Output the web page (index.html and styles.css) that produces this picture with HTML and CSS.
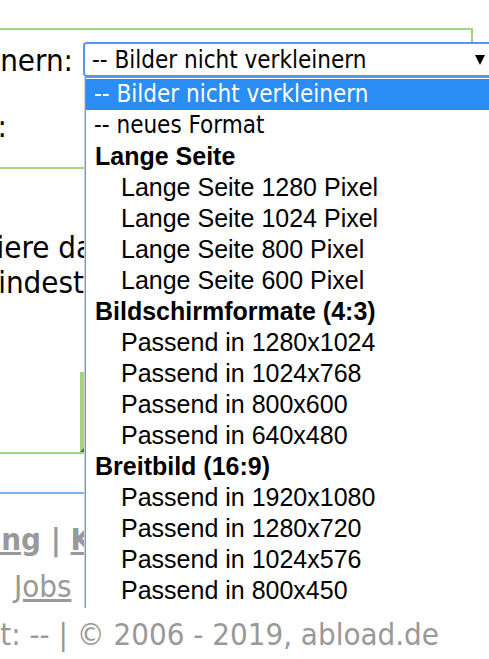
FILE: index.html
```html
<!DOCTYPE html>
<html lang="de">
<head>
    <meta charset="utf-8">
    <title>abload.de - Bilder hochladen</title>
    <link rel="stylesheet" href="styles.css">
</head>
<body>
    <div class="upload-box">
        <div class="form-row">
            <div class="form-label"><span>Bilder verkleinern:</span></div>
            <div class="select-box">
                <span class="select-value">-- Bilder nicht verkleinern</span>
                <svg class="select-arrow" width="10" height="10" viewBox="0 0 10 10"><polygon points="0,0 10,0 5,10"/></svg>
            </div>
        </div>
        <div class="form-row">
            <div class="form-label form-label-short"><span>Galerie:</span></div>
        </div>
    </div>

    <p class="intro">
        <span class="intro-line intro-first">Kopiere das Bild</span>
        <span class="intro-line intro-second">mindestens ein Bild</span>
    </p>

    <div class="upload-button"></div>

    <div class="footer">
        <div class="footer-links">
            <span class="links-clip"><a href="#">Anleitung</a></span><span class="sep"> | </span><a href="#">Kontakt</a>
        </div>
        <div class="jobs-line"><a href="#">Jobs</a></div>
        <div class="copyright"><span>Serverzeit: -- | © 2006 - 2019, abload.de</span></div>
    </div>

    <div class="dropdown">
        <div class="dropdown-item dropdown-plain dropdown-active">-- Bilder nicht verkleinern</div>
        <div class="dropdown-item dropdown-plain">-- neues Format</div>
        <div class="dropdown-item dropdown-label">Lange Seite</div>
        <div class="dropdown-item dropdown-option">Lange Seite 1280 Pixel</div>
        <div class="dropdown-item dropdown-option">Lange Seite 1024 Pixel</div>
        <div class="dropdown-item dropdown-option">Lange Seite 800 Pixel</div>
        <div class="dropdown-item dropdown-option">Lange Seite 600 Pixel</div>
        <div class="dropdown-item dropdown-label">Bildschirmformate (4:3)</div>
        <div class="dropdown-item dropdown-option">Passend in 1280x1024</div>
        <div class="dropdown-item dropdown-option">Passend in 1024x768</div>
        <div class="dropdown-item dropdown-option">Passend in 800x600</div>
        <div class="dropdown-item dropdown-option">Passend in 640x480</div>
        <div class="dropdown-item dropdown-label">Breitbild (16:9)</div>
        <div class="dropdown-item dropdown-option">Passend in 1920x1080</div>
        <div class="dropdown-item dropdown-option">Passend in 1280x720</div>
        <div class="dropdown-item dropdown-option">Passend in 1024x576</div>
        <div class="dropdown-item dropdown-option">Passend in 800x450</div>
        <div class="dropdown-item dropdown-option">Passend in 640x360</div>
    </div>
</body>
</html>
```

FILE: styles.css
```css
body {
    margin: 0;
    font-family: "DejaVu Sans Condensed", "DejaVu Sans", Verdana, sans-serif;
    font-stretch: condensed;
    font-size: 31px;
    color: #000;
    background: #fff;
    overflow: hidden;
}
a {
    color: #999;
    text-decoration: underline;
}
.upload-box {
    margin-top: 28px;
    width: 473px;
    height: 141px;
    box-sizing: border-box;
    border: 2px solid #a2d67c;
    border-left: none;
    padding-top: 12px;
}
.form-row {
    display: flex;
    align-items: center;
    gap: 10px;
    height: 35px;
}
.form-row + .form-row {
    margin-top: 31px;
}
.form-label {
    width: 73px;
    flex-shrink: 0;
    display: flex;
    justify-content: flex-end;
    white-space: nowrap;
}
.form-label-short {
    width: 7px;
}
.select-box {
    width: 412px;
    height: 35px;
    flex-shrink: 0;
    box-sizing: border-box;
    border: 2px solid #5b94ec;
    border-radius: 4px;
    background: #fff;
    display: flex;
    align-items: center;
    justify-content: space-between;
    padding: 0 8px 0 7px;
    font-size: 24px;
    white-space: nowrap;
}
.select-arrow {
    fill: #000;
}
.intro {
    margin: 61px 0 0;
    line-height: 35px;
    white-space: nowrap;
}
.intro-line {
    display: block;
}
.intro-first {
    margin-left: -55px;
}
.intro-second {
    margin-left: -29px;
}
.upload-button {
    position: relative;
    margin-top: 72px;
    width: 80px;
    height: 80px;
    border-right: 5px solid #a2d67c;
    border-bottom: 2px solid #a2d67c;
}
.upload-button::after {
    content: "";
    position: absolute;
    right: -4px;
    bottom: 0;
    border-left: 4px solid transparent;
    border-bottom: 4px solid #5a6b50;
}
.footer {
    margin-top: 38px;
    width: 473px;
    border-top: 2px solid #7db3f1;
    color: #999;
}
.footer-links {
    margin-top: 28px;
    line-height: 35px;
    display: flex;
    font-weight: bold;
    white-space: nowrap;
}
.links-clip {
    width: 41px;
    flex-shrink: 0;
    display: flex;
    justify-content: flex-end;
}
.sep {
    white-space: pre;
}
.jobs-line {
    margin-top: 12px;
    line-height: 35px;
    padding-left: 14px;
}
.copyright {
    margin-top: 13px;
    width: 439px;
    line-height: 35px;
    display: flex;
    justify-content: flex-end;
    white-space: nowrap;
}
.dropdown {
    position: absolute;
    left: 85px;
    top: 77px;
    width: 420px;
    height: 531px;
    box-sizing: border-box;
    border-top: 1px solid #7e95bd;
    border-left: 1px solid #7e95bd;
    box-shadow: -1px 0 0 #c9d1de;
    padding-top: 1px;
    background: #fff;
    overflow: hidden;
    font-family: "Liberation Sans", Arial, sans-serif;
    font-stretch: normal;
    font-size: 25px;
}
.dropdown-item {
    height: 31px;
    line-height: 31px;
    padding-left: 8px;
    white-space: nowrap;
}
.dropdown-plain {
    font-family: "DejaVu Sans Condensed", "DejaVu Sans", Verdana, sans-serif;
    font-stretch: condensed;
    font-size: 24px;
}
.dropdown-active {
    background: #2a8cf5;
    color: #fff;
}
.dropdown-label {
    font-weight: bold;
    padding-left: 9px;
}
.dropdown-option {
    padding-left: 35px;
}
```
